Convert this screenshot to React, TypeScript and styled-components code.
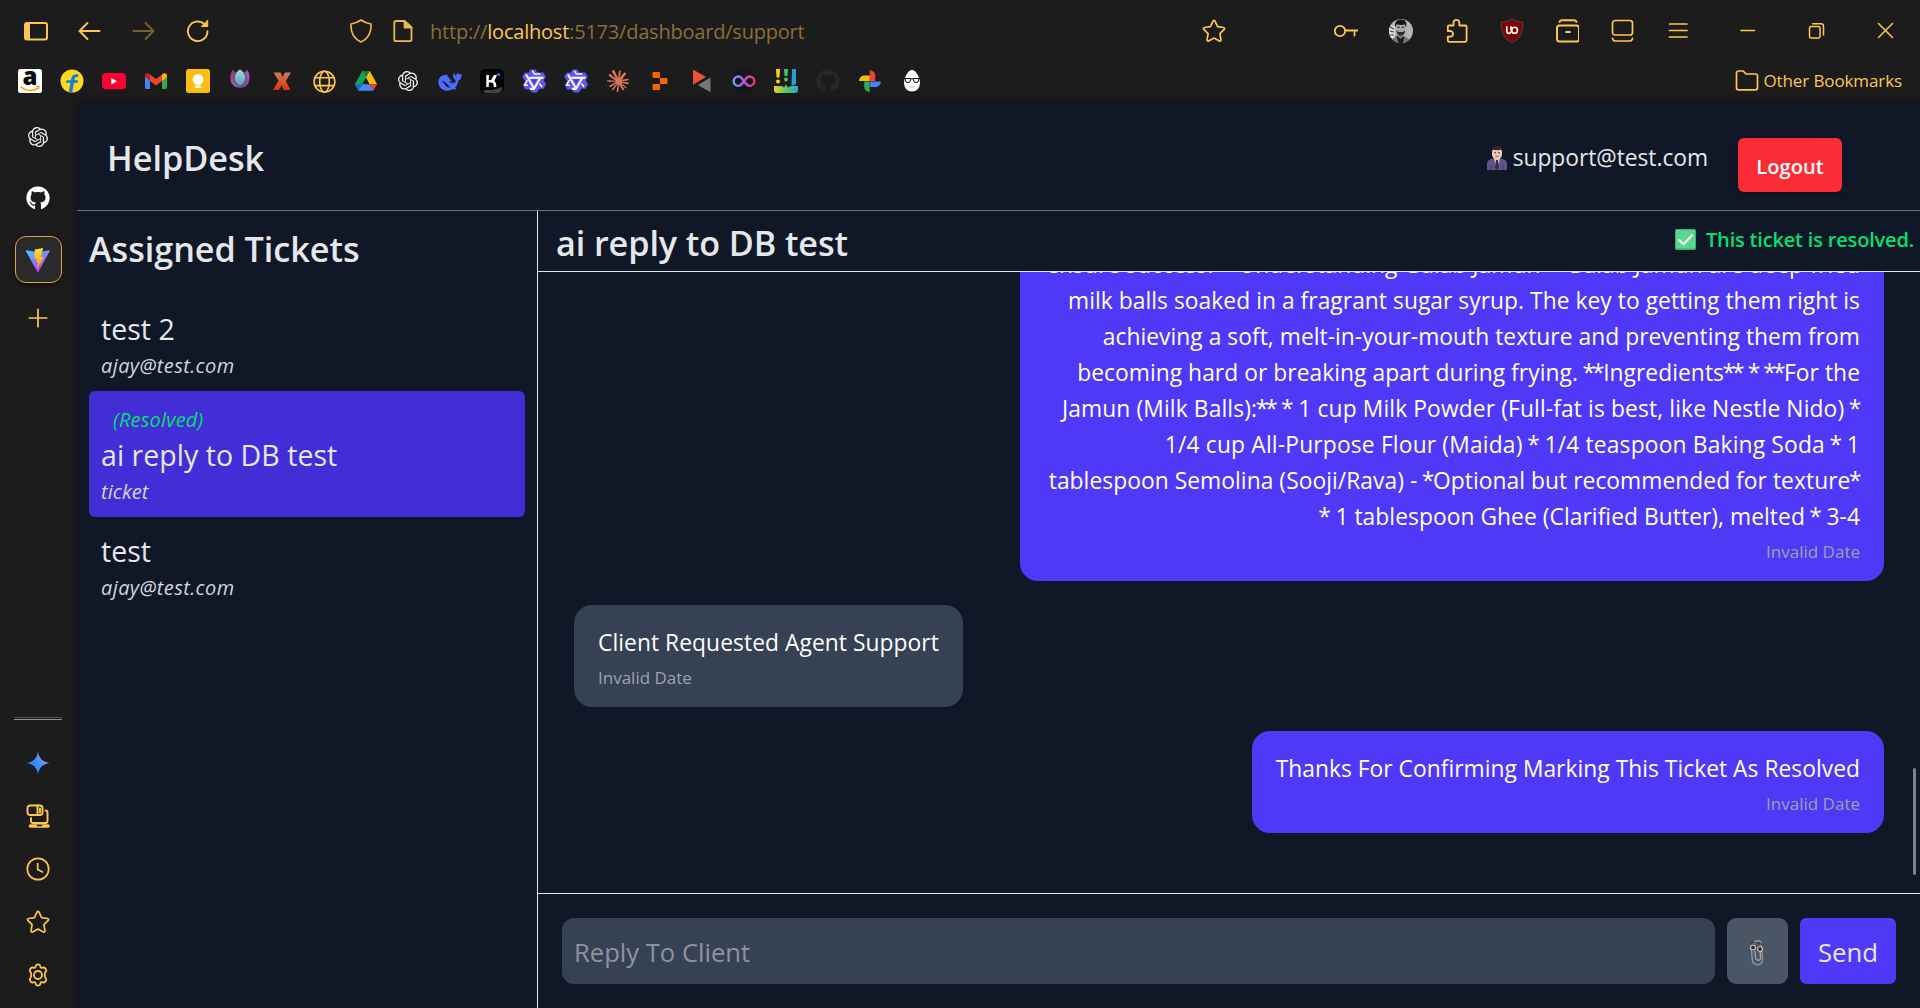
import React from "react";
import styled, { createGlobalStyle } from "styled-components";
import { SiOpenai, SiClaude, SiReplit } from "react-icons/si";
import { FaGithub } from "react-icons/fa";

const amber = "#fdc64f";
const line = "#e5e7eb";
const pageBg = "#101828";
const chromeBg = "#1c1c1c";

const GlobalStyle = createGlobalStyle`
  *, *::before, *::after { box-sizing: border-box; }
  body { margin: 0; background: ${chromeBg}; overflow: hidden; }
  #root { font-family: "Open Sans", "Noto Sans", sans-serif; }
  h1, h2, h3, p { margin: 0; font-weight: inherit; }
  svg { display: block; flex: none; }
`;

/* ---------- window frame ---------- */

const Window = styled.div`
  width: 1920px;
  height: 1008px;
  display: grid;
  grid-template-rows: 61px 41px 1fr;
  background: ${chromeBg};
  color: ${line};
  overflow: hidden;
`;

const Toolbar = styled.div`
  display: flex;
  align-items: center;
  padding-left: 24px;
  color: ${amber};
`;

const IconGroup = styled.div<{ $gap: number; $left?: number }>`
  display: flex;
  align-items: center;
  gap: ${(p) => p.$gap}px;
  margin-left: ${(p) => p.$left ?? 0}px;
`;

const UrlBar = styled.div`
  display: flex;
  align-items: center;
  gap: 18px;
  width: 877px;
  margin-left: 139px;
`;

const Url = styled.div`
  flex: 1;
  margin-left: -3px;
  padding-top: 2px;
  font-size: 20px;
  line-height: 28px;
  letter-spacing: -0.21px;
  color: #8b6f37;
  white-space: nowrap;
`;

const Host = styled.span`
  color: ${amber};
`;

const Bookmarks = styled.div`
  display: flex;
  align-items: center;
  gap: 18px;
  padding: 0 18px 2px;
  color: ${amber};
`;

const OtherBookmarks = styled.div`
  display: flex;
  align-items: center;
  gap: 4px;
  margin-left: auto;
  padding-top: 1px;
  font-size: 17px;
  line-height: 24px;
  letter-spacing: -0.11px;
  white-space: nowrap;
`;

const TabIcon = styled.span`
  width: 24px;
  height: 24px;
  display: flex;
  align-items: center;
  justify-content: center;
  flex: none;
`;

const Body = styled.div`
  display: grid;
  grid-template-columns: 77px 1fr;
  min-height: 0;
`;

const SideTabs = styled.nav`
  display: flex;
  flex-direction: column;
  align-items: center;
  padding: 4px 1px 7px 0;
  color: ${amber};
`;

const TabCell = styled.div<{ $h: number }>`
  height: ${(p) => p.$h}px;
  width: 48px;
  display: flex;
  align-items: center;
  justify-content: center;
`;

const ActiveTab = styled.div`
  width: 47px;
  height: 47px;
  margin-top: 1px;
  padding-top: 2px;
  display: flex;
  align-items: center;
  justify-content: center;
  border: 1px solid #d9a840;
  border-radius: 11px;
  background: #2a2a2a;
  box-shadow: 0 2px 4px rgba(0, 0, 0, 0.5);
`;

const SideRule = styled.div`
  width: 48px;
  height: 3px;
  margin: auto 0 17px;
  border-top: 1px solid #5d523f;
  border-bottom: 1px solid #8f8ea6;
`;

/* ---------- help desk page ---------- */

const Page = styled.div`
  display: grid;
  grid-template-rows: 109px 1fr;
  min-height: 0;
  background: ${pageBg};
  box-shadow: 0 0 8px rgba(0, 0, 0, 0.4);
`;

const Header = styled.header`
  display: flex;
  align-items: center;
  padding: 0 78px 0 30px;
  border-bottom: 1px solid #6a7282;
`;

const Heading = styled.h1<{ $track?: number }>`
  font-size: 34.2px;
  font-weight: 600;
  line-height: 45px;
  padding-top: 3px;
  letter-spacing: ${(p) => p.$track ?? 0}px;
  white-space: nowrap;
`;

const Account = styled.div`
  display: flex;
  align-items: center;
  gap: 6px;
  margin-left: auto;
  padding-top: 4px;
  font-size: 22.8px;
  line-height: 34px;
  letter-spacing: -0.04px;
  white-space: nowrap;
`;

const Logout = styled.button`
  width: 104px;
  height: 54px;
  margin: 18px 0 0 30px;
  padding: 4px 0 0;
  border: 0;
  border-radius: 6px;
  background: #fb2c36;
  color: #fff;
  font: 600 20px/28px "Open Sans", sans-serif;
  letter-spacing: 0.08px;
  box-shadow: 0 3px 6px rgba(0, 0, 0, 0.25);
`;

const Panels = styled.div`
  display: grid;
  grid-template-columns: 461px 1fr;
  min-height: 0;
`;

const TicketPanel = styled.aside`
  border-right: 1px solid ${line};
  padding: 12px 12px 0;
`;

const TicketList = styled.div`
  margin-top: 24px;
`;

const Ticket = styled.article<{ $active?: boolean }>`
  padding: 12px;
  border-radius: 6px;
  background: ${(p) => (p.$active ? "#432dd7" : "transparent")};
  white-space: nowrap;
`;

const Resolved = styled.p`
  margin-left: 12px;
  padding-top: 4px;
  font-size: 20px;
  font-style: italic;
  line-height: 26px;
  letter-spacing: 0.2px;
  color: #05df72;
`;

const TicketTitle = styled.h3`
  padding-top: 3px;
  font-size: 28.5px;
  line-height: 39px;
  letter-spacing: 0.04px;
`;

const TicketOwner = styled.p<{ $track: number }>`
  padding-top: 4px;
  font-size: 20px;
  font-style: italic;
  line-height: 26px;
  letter-spacing: ${(p) => p.$track}px;
  color: #d1d5dc;
`;

const Conversation = styled.section`
  display: grid;
  grid-template-rows: 61px 1fr 115px;
  min-height: 0;
  min-width: 0;
`;

const ConversationHead = styled.div`
  display: flex;
  justify-content: space-between;
  padding: 6px 6px 0 18px;
  border-bottom: 1px solid ${line};
`;

const Status = styled.div`
  display: flex;
  align-items: center;
  gap: 10px;
  height: 30px;
  margin-top: 6px;
  padding-top: 3px;
  color: #05df72;
  font-size: 20px;
  font-weight: 600;
  line-height: 26px;
  letter-spacing: -0.18px;
  white-space: nowrap;
`;

const Messages = styled.div`
  position: relative;
  display: flex;
  flex-direction: column;
  justify-content: flex-end;
  gap: 24px;
  min-height: 0;
  padding: 0 36px 60px;
  overflow: hidden;
`;

const Bubble = styled.div<{ $mine?: boolean }>`
  flex: none;
  align-self: ${(p) => (p.$mine ? "flex-end" : "flex-start")};
  padding: 18px 24px;
  border-radius: 18px;
  background: ${(p) => (p.$mine ? "#4f39f6" : "#364153")};
  color: #fff;
  text-align: ${(p) => (p.$mine ? "right" : "left")};
`;

const WideBubble = styled(Bubble)`
  width: 864px;
`;

const Line = styled.p<{ $track?: number }>`
  padding-top: 4px;
  font-size: 22.8px;
  line-height: 32px;
  letter-spacing: ${(p) => p.$track ?? 0.03}px;
  white-space: nowrap;
`;

const Star = styled.span`
  margin: 0 -1.500px;
`;

const Stamp = styled.p`
  margin-top: 6px;
  padding-top: 2px;
  font-size: 17px;
  line-height: 22px;
  color: #99a1af;
`;

const ScrollThumb = styled.div`
  position: absolute;
  right: 4px;
  top: 496px;
  width: 3px;
  height: 107px;
  border-radius: 2px;
  background: #808287;
`;

const Composer = styled.div`
  display: grid;
  grid-template-columns: 1fr 61px 96px;
  gap: 12px;
  padding: 24px;
  border-top: 1px solid ${line};
`;

const ReplyInput = styled.input`
  min-width: 0;
  height: 66px;
  padding: 3px 12px 0;
  border: 0;
  border-radius: 12px;
  background: #364153;
  color: ${line};
  font: 400 25.6px/38px "Open Sans", sans-serif;
  &::placeholder {
    color: #8d939e;
    opacity: 1;
  }
`;

const AttachButton = styled.button`
  display: flex;
  align-items: center;
  justify-content: center;
  height: 66px;
  padding: 3px 2px 0 0;
  border: 0;
  border-radius: 9px;
  background: #4a5565;
`;

const SendButton = styled.button`
  height: 66px;
  padding: 3px 0 0;
  border: 0;
  border-radius: 6px;
  background: #4f39f6;
  color: ${line};
  font: 400 25.7px/38px "Open Sans", sans-serif;
`;

/* ---------- icons ---------- */

type GlyphProps = { children: React.ReactNode; size?: number; w?: number; opacity?: number };

const Glyph = ({ children, size = 24, w = 1.7, opacity }: GlyphProps) => (
  <svg width={size} height={size} viewBox="0 0 24 24" fill="none" stroke="currentColor"
    strokeWidth={w} strokeLinecap="round" strokeLinejoin="round" opacity={opacity}>
    {children}
  </svg>
);

const starPath =
  "M12 1.4c.5 0 .8.3 1 .7l2.6 5.6 6 .8c1 .1 1.300 1.200.6 1.900l-4.300 4.300 1.100 6.100c.1 1-.8 1.600-1.600 1.200L12 19l-5.400 3c-.8.4-1.700-.2-1.600-1.200l1.100-6.100-4.300-4.300c-.7-.7-.4-1.800.6-1.900l6-.8L11 2.100c.2-.4.5-.7 1-.7z";

const StarIcon = () => <Glyph w={1.7}><path d={starPath} /></Glyph>;

const Amazon = () => (
  <svg width="24" height="24" viewBox="0 0 24 24" overflow="visible">
    <rect width="24" height="24" rx="2.500" fill="#fff" />
    <text x="12" y="16.300" textAnchor="middle" fontFamily="Open Sans" fontWeight="800" fontSize="24" fill="#0a0a0a">a</text>
    <path d="M3 18.200c5.500 4.200 12 4 17 1" fill="none" stroke="#f90" strokeWidth="1.500" strokeLinecap="round" />
    <path d="M18 17.400l3-.1-.4 3" fill="none" stroke="#f90" strokeWidth="1.200" />
  </svg>
);

const Flipkart = () => (
  <svg width="24" height="24" viewBox="0 0 24 24">
    <circle cx="12" cy="12" r="11.500" fill="#fbd923" />
    <path d="M8.700 23.200l2.600-13.700c.7-3.600 2.800-4.700 7.200-4l-.5 2.600c-2-.3-2.900.1-3.300 2l-.2 1.100h3.500l-.5 2.500H14L12.200 23.600z" fill="#1b7bd8" />
    <path d="M6.500 11.200h9l-.5 2.500H6z" fill="#1b7bd8" />
  </svg>
);

const YouTube = () => (
  <svg width="24" height="24" viewBox="0 0 24 24">
    <rect y="4" width="24" height="16.300" rx="4" fill="#ff0033" />
    <path d="M9.300 8.900v6.600l5.700-3.300z" fill="#fff" />
  </svg>
);

const Gmail = () => (
  <svg width="24" height="24" viewBox="0 0 24 24">
    <path d="M1 7v11.500c0 .9.600 1.500 1.500 1.500H6V10z" fill="#4285f4" />
    <path d="M23 7v11.500c0 .9-.6 1.500-1.500 1.500H18V10z" fill="#34a853" />
    <path d="M6 5.500V12l6 4.400 6-4.400V5.500l-6 4.600z" fill="#ea4335" />
    <path d="M1 6.500V8l5 4V5.500L4.700 4.600C3.200 3.500 1 4.600 1 6.500z" fill="#c5221f" />
    <path d="M23 6.500V8l-5 4V5.500l1.300-.9C20.800 3.500 23 4.600 23 6.500z" fill="#fbbc04" />
  </svg>
);

const Keep = () => (
  <svg width="24" height="24" viewBox="0 0 24 24">
    <rect width="24" height="24" rx="2.500" fill="#fbbc15" />
    <circle cx="12" cy="10.500" r="5.400" fill="#fff" />
    <rect x="9" y="13.500" width="6" height="1.800" fill="#fff" />
    <rect x="9" y="16.600" width="6" height="2.200" rx=".6" fill="#fff" />
  </svg>
);

const Tulip = () => (
  <svg width="24" height="24" viewBox="0 0 24 24">
    <defs>
      <linearGradient id="petal" x1="0" y1="0" x2="0" y2="1">
        <stop offset="0" stopColor="#a3dfe0" />
        <stop offset="1" stopColor="#5c9cb4" />
      </linearGradient>
      <linearGradient id="sepal" x1="0" y1="0" x2="1" y2="1">
        <stop offset="0" stopColor="#8d3f68" />
        <stop offset=".6" stopColor="#a457b5" />
        <stop offset="1" stopColor="#6c3c86" />
      </linearGradient>
    </defs>
    <path d="M4.500 1C2 5 1.500 11 4 15c2 2.600 5 3.800 8 3.800s6-1.200 8-3.800c2.500-4 2-10-.5-14L15 4H9z" fill="url(#sepal)" />
    <path d="M12 0c-4.500 3.300-6.300 6.500-5.600 10.500C7 13.800 9 15.500 12 17.300c3-1.800 5-3.500 5.600-6.800C18.300 6.500 16.500 3.300 12 0z" fill="url(#petal)" stroke={chromeBg} strokeWidth=".6" />
  </svg>
);

const XMark = () => (
  <svg width="24" height="24" viewBox="0 0 24 24">
    <defs>
      <linearGradient id="xfill" x1="0" y1="0" x2="0" y2="1">
        <stop offset="0" stopColor="#cf7a5c" />
        <stop offset="1" stopColor="#dc3405" />
      </linearGradient>
    </defs>
    <path d="M3.500 3.500h7l2 4.500 2.500-4.500h6l-5.200 8.500 4.700 9h-6.800l-2-4.800-2.800 4.800h-6l5.700-9.200z" fill="url(#xfill)" />
  </svg>
);

const Globe = () => (
  <Glyph w={1.600}>
    <circle cx="12.500" cy="12.700" r="10.400" />
    <ellipse cx="12.500" cy="12.700" rx="4.800" ry="10.400" />
    <path d="M3.300 8.800h18.400M3.300 16.600h18.400" />
  </Glyph>
);

const Drive = () => (
  <svg width="24" height="24" viewBox="0 0 24 24">
    <path d="M8.300 2h7.400L4.600 21.700.9 15.200z" fill="#12a250" />
    <path d="M8.300 2h7.400l7.400 13.200h-7.400z" fill="#fdba12" />
    <path d="M8.300 2h7.400L12 8.600z" fill="#0b8043" />
    <path d="M.9 15.200h7.500L4.600 21.700z" fill="#1967d2" />
    <path d="M15.600 15.200h7.500l-3.700 6.500z" fill="#ea4335" />
    <path d="M8.400 15.200h7.200l3.800 6.500H4.600z" fill="#4a88f6" />
  </svg>
);

const DeepSeek = () => (
  <svg width="24" height="24" viewBox="0 0 24 24">
    <path d="M23.700 5.200c-1.300.2-1.900.2-2.900-.4-.8-.5-1.500-1-2.200.2-.2.500-.3 1.200-.3 1.900-1.300-.6-2-1.700-1.700-3.200-1 .6-1.600 1.700-1.500 3.300.1 1.900 1 3 2.400 4 .3 1.700-.6 3.400-1.300 3.200-2.300-.7-4-4.600-6.600-6.600-.4-.4.2-1.500-.2-1.700-1-.5-3 .2-4.500.7C1.500 7.600.2 10.700.5 14.200c.3 4.100 3.900 7.300 8.300 7.500 2.300.1 4.300-.4 6-1.600.8.4 2.500.6 3.200.1.500-.4 0-1-.9-1.500 1.700-2 2.900-4.400 3.100-7 2.300-.6 3.500-3.300 3.500-6.500z" fill="#4d6bfe" />
    <path d="M3.300 12.300c2-.5 4.200.5 6 2.900 1 1.400 2 2.500 3.300 3.200-2.900.6-4.800-1.200-5.900-3.200-.8-1.400-1.900-2.300-3.400-2.900z" fill={chromeBg} />
    <path d="M11.500 13c1-.8 2.400 0 2.500 1.500" stroke={chromeBg} strokeWidth="1.200" fill="none" />
  </svg>
);

const Kimi = () => (
  <svg width="24" height="24" viewBox="0 0 24 24">
    <rect width="24" height="24" rx="5.500" fill="#020202" />
    <path d="M3 21.500c4-1.500 7 .5 11-1 3-1 5-.5 8-3v2.500c0 2-2 4-4 4H6c-1.500 0-2.500-1-3-2.500z" fill="#3f4245" />
    <path d="M6.300 6v12h2.500v-4.600h2.400c2 0 2.600 1.200 2.600 4.600h2.600c0-3.300-.6-5-2.100-5.800L17 6h-3l-2.900 5.100H8.800V6z" fill="#fff" />
    <circle cx="18.700" cy="5.500" r="1.500" fill="#1783ff" />
  </svg>
);

const Qwen = () => (
  <svg width="24" height="24" viewBox="0 0 24 24">
    <path d="M8.500.4h5l1.600 3h6.200l2.500 4.300-2 3.600 2.200 4.200-2.500 4.300h-4.300l-2.300 3.800H9.800l-1.900-3.200H3.300L.8 16.200l2.300-3.900L.3 7.800l2.300-4h4z" fill="#6157ea" />
    <g fill="none" stroke="#f6f5ff" strokeWidth="2.200" strokeLinejoin="round">
      <path d="M7.300 8.800h14.200" />
      <path d="M4 5.500l7.600 13.200" />
      <path d="M7.800 19.800h4.200l6-10.400" />
      <path d="M17.500 14.500l2.500 3.500" strokeWidth="1.500" />
      <path d="M10.300 1.500l2 3.500h6" strokeWidth="1.500" />
      <path d="M5.500 11l-3 5.200h3.500" strokeWidth="1.500" />
    </g>
    <path d="M9.800 10.500h4.600l-2.300 4z" fill="#4d38c9" />
  </svg>
);

const CodeFlags = () => (
  <svg width="24" height="24" viewBox="0 0 24 24">
    <path d="M3 .5l13 7.600L3 15.700z" fill="#ef5138" />
    <path d="M20.500 8.500v14.800L7.800 16z" fill="#767676" />
  </svg>
);

const InfinityMark = () => (
  <svg width="24" height="24" viewBox="0 0 24 24">
    <defs>
      <linearGradient id="inf" x1="0" y1="0" x2="1" y2="0">
        <stop offset="0" stopColor="#6b9cf8" />
        <stop offset=".45" stopColor="#b75be6" />
        <stop offset="1" stopColor="#f5317f" />
      </linearGradient>
    </defs>
    <circle cx="12" cy="12" r="11.500" fill="#10171d" />
    <path d="M12 12.200c-1.900-3-3.300-4.700-5.600-4.700a4.700 4.700 0 000 9.400c2.300 0 3.700-1.700 5.600-4.700s3.300-4.700 5.600-4.700a4.700 4.700 0 010 9.400c-2.300 0-3.700-1.700-5.600-4.700z" fill="none" stroke="url(#inf)" strokeWidth="2.400" />
  </svg>
);

const PaintPens = () => (
  <svg width="24" height="24" viewBox="0 0 24 24">
    <defs>
      <linearGradient id="pens" x1="0" y1="0" x2="1" y2="0">
        <stop offset="0" stopColor="#f4d21f" />
        <stop offset=".5" stopColor="#58c66a" />
        <stop offset="1" stopColor="#2aa6c9" />
      </linearGradient>
    </defs>
    <path d="M0 17h8l2 1.500 2-3 2 3 3-1.500h7v4a3 3 0 01-3 3H3a3 3 0 01-3-3z" fill="url(#pens)" />
    <path d="M2 0h4l-.5 8.500h-3z" fill="#fbd31c" />
    <circle cx="4" cy="12.500" r="2" fill="#fbd31c" />
    <path d="M10 0h4l-.5 7h-3z" fill="#46c35f" />
    <circle cx="12" cy="10.500" r="2" fill="#46c35f" />
    <path d="M18 0h4v15l-3 1.500H17.500z" fill="#2a9bd8" />
  </svg>
);

const Photos = () => (
  <svg width="24" height="24" viewBox="0 0 24 24">
    <path d="M11.700 1.200c3 0 5.500 2.400 5.500 5.400v5.300h-5.500z" fill="#ea4335" />
    <path d="M22.800 12.400c0 3-2.400 5.500-5.400 5.500h-5.300v-5.500z" fill="#4285f4" />
    <path d="M11.700 22.900c-3 0-5.500-2.400-5.500-5.400v-5.100h5.500z" fill="#34a853" />
    <path d="M1 11.900c0-3 2.400-5.500 5.400-5.500h5.300v5.500z" fill="#fbbc04" />
  </svg>
);

const EggHead = () => (
  <svg width="24" height="24" viewBox="0 0 24 24">
    <path d="M12 1c4 0 8 7.500 8 13 0 5-3.600 8.500-8 8.500S4 19 4 14C4 8.500 8 1 12 1z" fill="#fafafa" />
    <path d="M1 9.500h4M23 9.500h-4M5 9.500h5.500v1.300a2.600 2.600 0 01-5.200.3zM13.500 9.500H19l-.3 1.600a2.600 2.600 0 01-5.200-.3zM10.500 9.800h3" fill="none" stroke="#111" strokeWidth="1" />
    <path d="M9.500 17.500c1.500.8 3.500.8 5 0" stroke="#bbb" fill="none" />
  </svg>
);

const Avatar = () => (
  <svg width="24" height="24" viewBox="0 0 24 24">
    <defs><clipPath id="avatarClip"><circle cx="12" cy="12" r="12" /></clipPath></defs>
    <g clipPath="url(#avatarClip)">
      <rect width="24" height="24" fill="#b4b4b4" />
      <path d="M0 7h6v12H0z" fill="#dcdcdc" />
      <path d="M1 8l4 2M1 12l4 1M0 16l5 0" stroke="#444" strokeWidth="1.200" />
      <path d="M2 24c1-5 5-7.500 9-7.500s9 2 11 7.500z" fill="#767676" />
      <path d="M11.500 20l-4.500-4 2.500 8h4.500l1.500-7z" fill="#1b1b1b" />
      <ellipse cx="11.800" cy="9.500" rx="4.600" ry="7" fill="#a8a8a8" />
      <path d="M6.500 8.500C5 3 8 .5 12 .5S18.500 3 17 8.500l-1-3c-3 .8-6 .5-8.300-.3z" fill="#131313" />
      <path d="M7.300 11.500c.5 7 8.500 7 9 0-1.500 1.200-2.500 1.600-4.500 1.600s-3-.4-4.500-1.600z" fill="#2c2c2c" />
      <path d="M8.300 8.200h2.500M12.800 8.200h2.500" stroke="#222" strokeWidth="1.100" />
    </g>
  </svg>
);

const Ublock = () => (
  <svg width="24" height="24" viewBox="0 0 24 24">
    <path d="M12 .4c3.400 2.100 6.400 2.500 10.600 2.600 0 10.500-1.300 15.700-10.600 20.600C2.700 18.700 1.400 13.500 1.400 3 5.600 2.900 8.600 2.500 12 .4z" fill="#800000" stroke="#5b5555" strokeWidth=".8" />
    <path d="M6.800 7.300v5c0 1.400.7 2.100 2 2.100s2-.7 2-2.100M11 7.300v4" fill="none" stroke="#fff" strokeWidth="1.600" />
    <rect x="11.800" y="8.200" width="5.600" height="6" rx="2.800" fill="none" stroke="#fff" strokeWidth="1.600" />
  </svg>
);

const ViteLogo = () => (
  <svg width="26" height="26" viewBox="0 0 26 26">
    <defs>
      <linearGradient id="viteA" x1="0" y1="0" x2=".6" y2="1">
        <stop offset="0" stopColor="#41d1ff" />
        <stop offset="1" stopColor="#bd34fe" />
      </linearGradient>
      <linearGradient id="viteB" x1="0" y1="0" x2="0" y2="1">
        <stop offset="0" stopColor="#ffdd35" />
        <stop offset="1" stopColor="#ffa800" />
      </linearGradient>
    </defs>
    <path d="M24.700 4.200L13.400 24.900c-.2.400-.8.400-1 0L.9 4.200c-.3-.5.200-1 .7-.9l11.300 2 11.100-2c.5-.1 1 .4.700.9z" fill="url(#viteA)" />
    <path d="M18.200.9L9.800 2.500l-.5 9.200 2.600-.5-.7 4 1.800-.5-.9 5.200c.4 1 .9.500 1.200 0L19 9.700l-3.300.6z" fill="url(#viteB)" />
  </svg>
);

const Gemini = () => (
  <svg width="24" height="24" viewBox="0 0 24 24">
    <defs>
      <linearGradient id="gem" x1="0" y1=".8" x2="1" y2=".2">
        <stop offset="0" stopColor="#1c7dff" />
        <stop offset=".5" stopColor="#3c8ffd" />
        <stop offset="1" stopColor="#c79bf0" />
      </linearGradient>
    </defs>
    <path d="M12 .5C12.900 7.200 16.800 11.100 23.500 12 16.800 12.900 12.900 16.800 12 23.500 11.100 16.800 7.200 12.900.5 12 7.200 11.100 11.100 7.200 12 .5z" fill="url(#gem)" />
  </svg>
);

const Devices = () => (
  <Glyph w={1.900}>
    <rect x="1.500" y="1.500" width="15" height="9.500" rx="2.500" />
    <path d="M11.500 1.500v9.500M14 4.500v4" />
    <path d="M5 14v3a2 2 0 002 2h12.500a2 2 0 002-2V8.500a2 2 0 00-2-2" />
    <path d="M4.500 22h17.500" strokeWidth="3.600" />
    <path d="M11.500 21.500h4" stroke={chromeBg} strokeWidth="1.300" />
  </Glyph>
);

const Gear = () => (
  <Glyph w={1.800}>
    <circle cx="12" cy="12" r="4" />
    <path d="M9.700 3.300c.2-1.300.9-2 2.300-2s2.100.7 2.300 2c.2 1.300 1.200 1.900 2.400 1.400 1.300-.5 2.200-.2 2.900 1s1.400 1.900.1 3.100c-1.300 1-1.300 5.400 0 6.400 1.300 1.200.6 1.900-.1 3.100s-1.600 1.500-2.900 1c-1.200-.5-2.200.1-2.400 1.400s-.9 2-2.300 2-2.100-.7-2.300-2-1.200-1.900-2.400-1.400c-1.300.5-2.200.2-2.900-1s-1.400-1.900-.1-3.100c1.300-1 1.300-5.400 0-6.400-1.300-1.200-.6-1.900.1-3.100s1.600-1.500 2.900-1c1.200.5 2.200-.1 2.400-1.400z" />
  </Glyph>
);

const Agent = () => (
  <svg width="20" height="24" viewBox="0 0 20 24">
    <path d="M0 24v-6c0-3 2-4.500 5-5.200l5-1.300 5 1.300c3 .7 5 2.200 5 5.200v6z" fill="#63518a" />
    <path d="M4 19v5M16 19v5" stroke="#463a68" strokeWidth="1" />
    <path d="M7 12.500h6l-1.500 6-1.500 5.500-1.500-5.500z" fill="#cfc8dc" />
    <path d="M9 14h2l1 8-2 2-2-2z" fill="#3a2b44" />
    <path d="M5 5c0-3 2-4.500 5-4.500S15 2 15 5v3c0 3-2 5.500-5 5.500S5 11 5 8z" fill="#eccdbb" />
    <path d="M4.500 6C4 2 6.500 0 10 0s6 2 5.500 6L14 3.800c-2.500.5-5.500.5-8 0z" fill="#33262a" />
    <circle cx="8" cy="6.700" r=".8" fill="#2d2030" />
    <circle cx="12" cy="6.700" r=".8" fill="#2d2030" />
    <path d="M8.300 10.300h3.400" stroke="#c2546a" strokeWidth="1.100" />
  </svg>
);

const CheckBadge = () => (
  <svg width="21" height="21" viewBox="0 0 21 21">
    <rect width="21" height="21" rx="1.800" fill="#3fae70" />
    <rect x="1" y="1" width="19" height="18.500" rx="1.200" fill="#5ad68e" />
    <path d="M4 11l4.500 4.300 8.500-9" fill="none" stroke="#fff" strokeWidth="2.200" strokeLinecap="round" strokeLinejoin="round" />
  </svg>
);

const Clip = () => (
  <svg width="16" height="28" viewBox="0 0 16 28">
    <g fill="none" strokeLinecap="round">
      <path d="M4.500 5C5 1.500 11 0 12 4l1.500 16.500c0 7-9.500 7-10.200 0L2.500 11c0-1 .5-2 1.500-2" stroke="#8d9095" strokeWidth="1.600" />
      <path d="M11 11l.5 8c0 3-4.500 3-5 0L6 12" stroke="#a2a5aa" strokeWidth="1.300" />
    </g>
    <circle cx="4" cy="8.500" r="2.800" fill="#e8e2de" />
    <circle cx="11" cy="10" r="2.800" fill="#e8e2de" />
    <circle cx="4" cy="8.500" r="1.900" fill="#38221e" />
    <circle cx="11" cy="10" r="1.900" fill="#38221e" />
    <path d="M1.500 4.500C3 3 4.500 3 5.500 4M9 5c1.500-1 3-.5 4 1" fill="none" stroke="#49302d" strokeWidth="1.300" />
  </svg>
);

/* ---------- content ---------- */

const recipe: [string, number][] = [
  ["ensure success. **Understanding Gulab Jamun** Gulab Jamun are deep-fried", 0.03],
  ["milk balls soaked in a fragrant sugar syrup. The key to getting them right is", 0.04],
  ["achieving a soft, melt-in-your-mouth texture and preventing them from", 0.035],
  ["becoming hard or breaking apart during frying. **Ingredients** * **For the", 0.05],
  ["Jamun (Milk Balls):** * 1 cup Milk Powder (Full-fat is best, like Nestle Nido) *", 0.12],
  ["1/4 cup All-Purpose Flour (Maida) * 1/4 teaspoon Baking Soda * 1", 0.17],
  ["tablespoon Semolina (Sooji/Rava) - *Optional but recommended for texture*", 0.05],
  ["* 1 tablespoon Ghee (Clarified Butter), melted * 3-4", 0.05],
];

/* Asterisks are set a little tighter than the words around them. */
const tightStars = (text: string) =>
  text.split(/(\*)/).map((part, i) => (part === "*" ? <Star key={i}>*</Star> : part));

const BrowserToolbar = () => (
  <Toolbar>
    <IconGroup $gap={30}>
      <Glyph w={2}>
        <rect x="1" y="4" width="22" height="16.500" rx="2" />
        <path d="M2.500 5v14.500M4.500 5v14.500" strokeWidth="3" />
      </Glyph>
      <Glyph w={1.900}><path d="M21.500 12H1.500M9.500 4l-8 8 8 8" /></Glyph>
      <Glyph w={1.900} opacity={0.4}><path d="M1.500 12h20M13.500 4l8 8-8 8" /></Glyph>
      <Glyph w={1.900}>
        <path d="M21.500 12.200A9.800 9.800 0 1118.300 5" />
        <path d="M21.700 1.500v6h-6z" fill="currentColor" strokeWidth="1" />
      </Glyph>
    </IconGroup>
    <UrlBar>
      <Glyph w={1.700} opacity={0.92}><path d="M12 1c3 2.200 6 3.200 10 4 .5 8.500-2.500 14.500-10 18C4.500 19.500 1.500 13.500 2 5c4-.8 7-1.800 10-4z" /></Glyph>
      <Glyph w={1.800} opacity={0.92}>
        <path d="M5 2h8l7.500 6.500v12a1.700 1.700 0 01-1.700 1.700H5a1.700 1.700 0 01-1.700-1.700V3.700A1.700 1.700 0 015 2z" />
        <path d="M13.500 2v6.500h7z" fill="currentColor" />
      </Glyph>
      <Url>http://<Host>localhost</Host>:5173/dashboard/support</Url>
      <StarIcon />
    </UrlBar>
    <IconGroup $gap={31.3} $left={108}>
      <Glyph w={1.800}>
        <circle cx="6" cy="12" r="5.200" />
        <path d="M11.500 11.500H23.500M20.500 11.500v5" />
      </Glyph>
      <Avatar />
      <Glyph w={1.800}>
        <path d="M8.500 6.500V3.800a2.900 2.900 0 015.800 0v2.700h6a1.300 1.300 0 011.300 1.300v13.500a1.500 1.500 0 01-1.500 1.500H4.300a1.500 1.500 0 01-1.500-1.500v-3.600h2.400a2.800 2.800 0 000-5.700H2.800V7.800a1.300 1.300 0 011.300-1.300z" />
      </Glyph>
      <Ublock />
      <Glyph w={2}>
        <rect x="2" y="6.500" width="22" height="16" rx="2.500" />
        <path d="M4.500 2.800c.5-1.200 1.200-1.500 2.500-1.500h12c1.300 0 2 .3 2.500 1.500M11 13h4" />
      </Glyph>
      <Glyph w={1.700}>
        <rect x="2.500" y="1.500" width="20" height="14.500" rx="2.500" />
        <path d="M2.500 19.300c.3 2 1.200 2.700 3 2.700h14c1.800 0 2.700-.7 3-2.700" />
      </Glyph>
      <Glyph w={1.700}><path d="M3.500 5h17.500M3.500 11.500h17.500M3.500 18h17.500" /></Glyph>
    </IconGroup>
    <IconGroup $gap={45} $left={46.500}>
      <Glyph w={1.600}><path d="M5 11.500h13.500" /></Glyph>
      <Glyph w={1.500}>
        <rect x="4.500" y="7.500" width="10.500" height="11.500" rx="1.500" />
        <path d="M7.500 4.700H16a2.500 2.500 0 012.500 2.500V16" />
      </Glyph>
      <Glyph w={1.500}><path d="M4.500 4.500l14 14M18.500 4.500l-14 14" /></Glyph>
    </IconGroup>
  </Toolbar>
);

const BookmarkBar = () => (
  <Bookmarks>
    <Amazon />
    <Flipkart />
    <YouTube />
    <Gmail />
    <Keep />
    <Tulip />
    <XMark />
    <Globe />
    <Drive />
    <TabIcon><SiOpenai size={20} color="#f2f2f2" /></TabIcon>
    <DeepSeek />
    <Kimi />
    <Qwen />
    <Qwen />
    <TabIcon><SiClaude size={22} color="#d97757" /></TabIcon>
    <TabIcon><SiReplit size={18} color="#f26207" /></TabIcon>
    <CodeFlags />
    <InfinityMark />
    <PaintPens />
    <TabIcon><FaGithub size={24} color="#24292e" /></TabIcon>
    <Photos />
    <EggHead />
    <OtherBookmarks>
      <Glyph w={1.700}><path d="M1.500 4A2 2 0 013.500 2h4.700l2.800 3h9.500a2 2 0 012 2v11.800a2 2 0 01-2 2H3.500a2 2 0 01-2-2z" /></Glyph>
      Other Bookmarks
    </OtherBookmarks>
  </Bookmarks>
);

const VerticalTabs = () => (
  <SideTabs>
    <TabCell $h={61}><SiOpenai size={20} color="#f2f2f2" /></TabCell>
    <TabCell $h={61}><FaGithub size={24} color="#fff" /></TabCell>
    <TabCell $h={61}><ActiveTab><ViteLogo /></ActiveTab></TabCell>
    <TabCell $h={57}><Glyph w={1.900} size={22}><path d="M12 2.500v19M2.500 12h19" /></Glyph></TabCell>
    <SideRule />
    <TabCell $h={52.8}><Gemini /></TabCell>
    <TabCell $h={52.8}><Devices /></TabCell>
    <TabCell $h={52.8}>
      <Glyph><circle cx="12" cy="12" r="10.700" /><path d="M11.700 6.500v6l4.800 2.500" /></Glyph>
    </TabCell>
    <TabCell $h={52.8}><StarIcon /></TabCell>
    <TabCell $h={52.8}><Gear /></TabCell>
  </SideTabs>
);

export default function App() {
  return (
    <Window>
      <GlobalStyle />
      <BrowserToolbar />
      <BookmarkBar />
      <Body>
        <VerticalTabs />
        <Page>
          <Header>
            <Heading>HelpDesk</Heading>
            <Account><Agent />support@test.com</Account>
            <Logout>Logout</Logout>
          </Header>
          <Panels>
            <TicketPanel>
              <Heading $track={-0.04}>Assigned Tickets</Heading>
              <TicketList>
                <Ticket>
                  <TicketTitle>test 2</TicketTitle>
                  <TicketOwner $track={0.4}>ajay@test.com</TicketOwner>
                </Ticket>
                <Ticket $active>
                  <Resolved>(Resolved)</Resolved>
                  <TicketTitle>ai reply to DB test</TicketTitle>
                  <TicketOwner $track={0.06}>ticket</TicketOwner>
                </Ticket>
                <Ticket>
                  <TicketTitle>test</TicketTitle>
                  <TicketOwner $track={0.4}>ajay@test.com</TicketOwner>
                </Ticket>
              </TicketList>
            </TicketPanel>
            <Conversation>
              <ConversationHead>
                <Heading $track={-0.1}>ai reply to DB test</Heading>
                <Status><CheckBadge />This ticket is resolved.</Status>
              </ConversationHead>
              <Messages>
                <WideBubble $mine>
                  {recipe.map(([text, track]) => (
                    <Line key={text} $track={track}>{tightStars(text)}</Line>
                  ))}
                  <Stamp>Invalid Date</Stamp>
                </WideBubble>
                <Bubble>
                  <Line $track={0.06}>Client Requested Agent Support</Line>
                  <Stamp>Invalid Date</Stamp>
                </Bubble>
                <Bubble $mine>
                  <Line>Thanks For Confirming Marking This Ticket As Resolved</Line>
                  <Stamp>Invalid Date</Stamp>
                </Bubble>
                <ScrollThumb />
              </Messages>
              <Composer>
                <ReplyInput placeholder="Reply To Client" />
                <AttachButton aria-label="Attach"><Clip /></AttachButton>
                <SendButton>Send</SendButton>
              </Composer>
            </Conversation>
          </Panels>
        </Page>
      </Body>
    </Window>
  );
}
